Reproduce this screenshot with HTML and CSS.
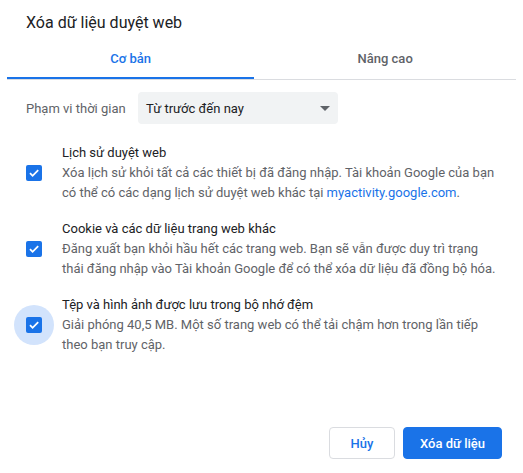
FILE: index.html
```html
<!DOCTYPE html>
<html lang="vi">
<head>
<meta charset="utf-8">
<title>Xóa dữ liệu duyệt web</title>
<link rel="stylesheet" href="styles.css">
</head>
<body>
<div class="dialog">
  <div class="title">Xóa dữ liệu duyệt web</div>
  <div class="tabs">
    <div class="tab active">Cơ bản</div>
    <div class="tab">Nâng cao</div>
  </div>
  <div class="content">
    <div class="range-row">
      <div class="range-label">Phạm vi thời gian</div>
      <div class="select">
        <span>Từ trước đến nay</span>
        <span class="arrow"></span>
      </div>
    </div>
    <div class="item">
      <div class="check-wrap">
        <span class="checkbox"><svg viewBox="0 0 16 16" width="16" height="16"><path d="M4 8.2l2.6 2.6L12.2 5.2" fill="none" stroke="#fff" stroke-width="1.8"/></svg></span>
      </div>
      <div class="text">
        <div class="item-title">Lịch sử duyệt web</div>
        <div class="item-desc">Xóa lịch sử khỏi tất cả các thiết bị đã đăng nhập. Tài khoản Google của bạn có thể có các dạng lịch sử duyệt web khác tại <span class="link">myactivity.google.com</span>.</div>
      </div>
    </div>
    <div class="item">
      <div class="check-wrap">
        <span class="checkbox"><svg viewBox="0 0 16 16" width="16" height="16"><path d="M4 8.2l2.6 2.6L12.2 5.2" fill="none" stroke="#fff" stroke-width="1.8"/></svg></span>
      </div>
      <div class="text">
        <div class="item-title">Cookie và các dữ liệu trang web khác</div>
        <div class="item-desc">Đăng xuất bạn khỏi hầu hết các trang web. Bạn sẽ vẫn được duy trì trạng thái đăng nhập vào Tài khoản Google để có thể xóa dữ liệu đã đồng bộ hóa.</div>
      </div>
    </div>
    <div class="item">
      <div class="check-wrap focused">
        <span class="checkbox"><svg viewBox="0 0 16 16" width="16" height="16"><path d="M4 8.2l2.6 2.6L12.2 5.2" fill="none" stroke="#fff" stroke-width="1.8"/></svg></span>
      </div>
      <div class="text">
        <div class="item-title">Tệp và hình ảnh được lưu trong bộ nhớ đệm</div>
        <div class="item-desc">Giải phóng 40,5 MB. Một số trang web có thể tải chậm hơn trong lần tiếp theo bạn truy cập.</div>
      </div>
    </div>
  </div>
  <div class="footer">
    <button class="btn cancel">Hủy</button>
    <button class="btn primary">Xóa dữ liệu</button>
  </div>
</div>
</body>
</html>
```

FILE: styles.css
```css
html, body {
  margin: 0;
  padding: 0;
  background: #fff;
}
body {
  font-family: Roboto, "Noto Sans", "Liberation Sans", sans-serif;
  font-size: 13px;
  color: #202124;
}
.dialog {
  width: 523px;
  height: 473px;
  display: flex;
  flex-direction: column;
  box-sizing: border-box;
}
.title {
  margin-top: 13px;
  padding-left: 26px;
  font-size: 16px;
  line-height: 20px;
  color: #202124;
}
.tabs {
  margin: 5px 7px 0;
  display: flex;
  border-bottom: 1px solid #dadce0;
}
.tab {
  flex: 1 1 auto;
  height: 41px;
  display: flex;
  align-items: center;
  justify-content: center;
  font-weight: 500;
  color: #5f6368;
  box-sizing: border-box;
  line-height: 16px;
}
.tab.active {
  color: #1a73e8;
  border-bottom: 2px solid #1a73e8;
  padding-top: 2px;
}
.content {
  padding: 12px 22px 0 26px;
}
.range-row {
  display: grid;
  grid-template-columns: 112px 200px;
  align-items: center;
  margin-bottom: 11px;
}
.range-label {
  color: #5f6368;
}
.select {
  height: 32px;
  background: #f1f3f4;
  border-radius: 4px;
  display: flex;
  align-items: center;
  justify-content: space-between;
  padding: 0 8px;
  box-sizing: border-box;
  color: #202124;
}
.arrow {
  width: 0;
  height: 0;
  border-left: 5px solid transparent;
  border-right: 5px solid transparent;
  border-top: 5px solid #5f6368;
}
.item {
  display: flex;
  align-items: center;
  padding: 8px 0;
}
.check-wrap {
  width: 16px;
  height: 16px;
  margin-right: 20px;
  flex: none;
  position: relative;
}
.check-wrap.focused::before {
  content: "";
  position: absolute;
  left: -12px;
  top: -12px;
  width: 40px;
  height: 40px;
  border-radius: 50%;
  background: #d2e3fc;
}
.checkbox {
  position: relative;
  display: block;
  width: 16px;
  height: 16px;
  background: #1a73e8;
  border-radius: 2px;
}
.checkbox svg {
  display: block;
}
.text {
  line-height: 20px;
}
.item-title {
  color: #202124;
}
.item-desc {
  color: #5f6368;
}
.link {
  color: #1a73e8;
}
.footer {
  margin-top: auto;
  display: flex;
  justify-content: flex-end;
  gap: 8px;
  padding: 0 21px 14px 0;
}
.btn {
  height: 32px;
  font-family: inherit;
  font-size: 13px;
  font-weight: 500;
  border-radius: 4px;
  padding: 0 16px;
  box-sizing: border-box;
  cursor: pointer;
}
.btn.cancel {
  min-width: 66px;
  background: #fff;
  color: #1a73e8;
  border: 1px solid #dadce0;
}
.btn.primary {
  background: #1a73e8;
  color: #fff;
  border: 1px solid #1a73e8;
}
```
